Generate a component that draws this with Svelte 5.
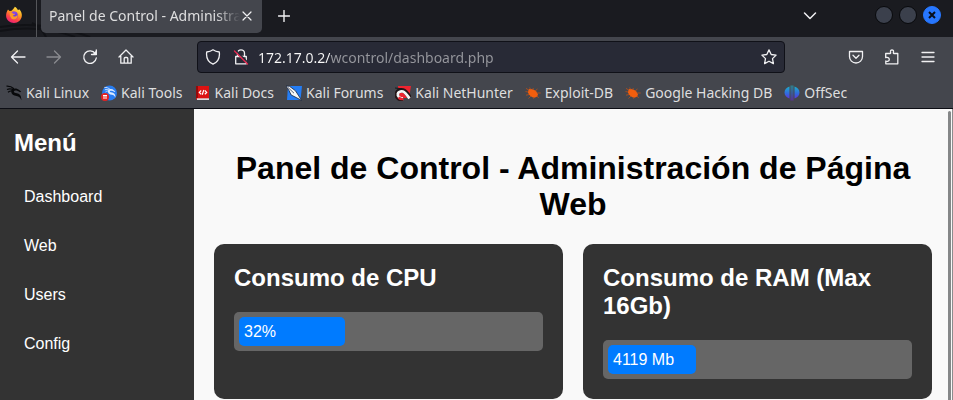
<script>
  const bookmarks = [
    { name: 'Kali Linux', icon: 'dragon' },
    { name: 'Kali Tools', icon: 'tools' },
    { name: 'Kali Docs', icon: 'docs' },
    { name: 'Kali Forums', icon: 'forums' },
    { name: 'Kali NetHunter', icon: 'nethunter' },
    { name: 'Exploit-DB', icon: 'bug' },
    { name: 'Google Hacking DB', icon: 'bug' },
    { name: 'OffSec', icon: 'offsec' },
  ];
  const menu = ['Dashboard', 'Web', 'Users', 'Config'];
  const cards = [
    { title: 'Consumo de CPU', value: '32%', percent: 32 },
    { title: 'Consumo de RAM (Max 16Gb)', value: '4119 Mb', percent: 26 },
  ];
  let address = $state('172.17.0.2/wcontrol/dashboard.php');
</script>

{#snippet dragon(color)}
  <path d="M.5 1.200C3.500 1 6 2 8 3.800M1 4.500C3.500 3.500 6 4 8 5.200M2 7.300C3.500 6 5 5.800 6.500 6" fill="none" stroke={color} stroke-width="1.200" />
  <path d="M7 4c2-1 4.500-.5 6.500 1.300l1.700 1.200-1.200.8c-2-1.500-4-2-5.500-1.500-1 .5-.8 1.500.3 2 3 .5 5 1 6 3.500l.7 4C14.300 12.500 13 11.500 10.500 11 7.500 10.500 5.500 9.200 5.300 7.200 5.200 5.500 5.800 4.500 7 4z" fill={color} />
{/snippet}

<div class="window">
  <header class="browser">
    <div class="tabstrip">
      <svg class="swirl" viewBox="0 0 120 37" fill="none" stroke="#111216" stroke-width="2" aria-hidden="true"><path d="M0 27Q45 20 90 37M0 31Q40 24 75 37M32 23Q42 28 46 37" /></svg>
      <span class="fox">
        <svg width="18" height="18" viewBox="0 0 18 18" aria-hidden="true">
          <defs>
            <linearGradient id="fox" x1=".8" y1="0" x2=".3" y2="1"><stop offset="0" stop-color="#fff04a" /><stop offset=".4" stop-color="#ffa01f" /><stop offset=".72" stop-color="#ff4545" /><stop offset="1" stop-color="#e91e78" /></linearGradient>
          </defs>
          <path d="M3 3.500 4.500 5l2-.2C7.500 3.500 9 3 9.800.8c2 1 2.500 2.400 3.200 3.400l1.200-1c2 2 2.900 4.200 2.600 6.700-.5 4-3.600 7-7.800 7s-7.700-3-7.900-7C1 7.500 1.800 5.200 3 3.500z" fill="url(#fox)" />
          <circle cx="9" cy="9.400" r="3.800" fill="#7540df" />
          <path d="M4.800 6.500c1.500-.6 3-.2 4 .8l1.500.5c-.5 1.200-1.600 1.300-2.500 1.900 1.500 1.400 3.800 1 4.500-.9.800 2.300-.8 4.600-3.300 4.600-2.800 0-4.600-2.500-4.200-6.900z" fill="#ff9a24" />
          <path d="M7 6.700c2-1.800 4.500-.7 5.200 1.200C10.800 7 9 7.600 8.400 8z" fill="#8b45e8" />
        </svg>
      </span>
      <div class="tab">
        <span class="tabtitle">Panel de Control - Administración</span>
        <button class="tabclose" aria-label="Cerrar pestaña"><svg width="10" height="10" viewBox="0 0 10 10"><path d="M1 1l8 8M9 1L1 9" /></svg></button>
      </div>
      <button class="tool newtab" aria-label="Nueva pestaña"><svg width="12" height="12" viewBox="0 0 12 12"><path d="M6 .5v11M.5 6h11" stroke-width="1.400" /></svg></button>
      <span class="spacer"></span>
      <button class="tool alltabs" aria-label="Listar pestañas"><svg width="14" height="10" viewBox="0 0 14 10"><path d="M1.500 2L7 7.500 12.500 2" stroke-width="1.500" /></svg></button>
      <div class="controls">
        <button class="dot" aria-label="Minimizar"></button>
        <button class="dot" aria-label="Maximizar"></button>
        <button class="dot close" aria-label="Cerrar"><svg width="8" height="8" viewBox="0 0 8 8"><path d="M1 1l6 6M7 1L1 7" /></svg></button>
      </div>
    </div>

    <div class="navbar">
      <div class="group">
        <button class="tool" aria-label="Atrás"><svg width="16" height="16" viewBox="0 0 16 16"><path d="M15 8H1.500M7.500 2L1.500 8l6 6" /></svg></button>
        <button class="tool dim" aria-label="Adelante"><svg width="16" height="16" viewBox="0 0 16 16"><path d="M1 8h13.500M8.500 2l6 6-6 6" /></svg></button>
        <button class="tool" aria-label="Recargar"><svg width="16" height="16" viewBox="0 0 16 16"><path d="M13.300 4.600A6.300 6.300 0 1 0 14.300 9M9.500 5.500h4.800V1" /><path d="M14.800 1v5H10z" fill="#f1f1f3" stroke="none" /></svg></button>
        <button class="tool" aria-label="Inicio"><svg width="16" height="16" viewBox="0 0 16 16"><path d="M1 8L8 1l7 7M2.800 7v7.200h10.400V7M6.200 14V9.500q0-1 1-1h1.600q1 0 1 1V14" /></svg></button>
      </div>
      <div class="urlbar">
        <svg width="16" height="16" viewBox="0 0 16 16"><path d="M8 .8c2 1.500 4.200 2 6.300 2.200.7 5.500-1.300 10-6.300 12.200C3 13 1 8.500 1.700 3 3.800 2.800 6 2.300 8 .8z" /></svg>
        <svg class="lock" width="16" height="16" viewBox="0 0 16 16"><path d="M2.700 7.500h10.600v7.300H2.700zM4.500 7.500V4.300a3.500 3.500 0 0 1 7 0v3.200" /><path d="M2.500 1l13 13" stroke="#282a36" stroke-width="1.500" /><path d="M1.500 2l13 13" stroke="#e22850" stroke-width="1.400" /></svg>
        <input aria-label="Dirección" type="text" spellcheck="false" bind:value={address} />
        <button class="star" aria-label="Añadir marcador"><svg width="16" height="16" viewBox="0 0 16 16"><path d="M8 .9l2.200 4.600 4.900.6-3.600 3.500.9 5L8 12.200l-4.400 2.400.9-5L.9 6.100l4.900-.6z" /></svg></button>
      </div>
      <div class="group">
        <button class="tool" aria-label="Pocket"><svg width="16" height="16" viewBox="0 0 16 16"><path d="M1.500 2.500h13v5a6.500 6.500 0 0 1-13 0zM5 6.300l3 3 3-3" /></svg></button>
        <button class="tool" aria-label="Extensiones"><svg width="16" height="16" viewBox="0 0 16 16"><path d="M1.700 4.500h4.500c.7 0 .5-.8.3-1.500C6.200 1.800 7 .9 8 .9s1.800.9 1.500 2.100c-.2.700-.4 1.500.3 1.500h4v10.300h-12V12c1.500.8 3.500 0 3.500-1.600S3.300 8 1.700 8.700z" /></svg></button>
        <button class="tool" aria-label="Menú de la aplicación"><svg width="16" height="16" viewBox="0 0 16 16"><path d="M2 3.500h12M2 8h12M2 12.500h12" /></svg></button>
      </div>
    </div>

    <nav class="bookmarks" aria-label="Marcadores">
      {#each bookmarks as b}
        <a href="#top">
          <svg width="16" height="16" viewBox="0 0 16 16" aria-hidden="true">
            {#if b.icon === 'dragon'}
              {@render dragon('#08090b')}
            {:else if b.icon === 'tools'}
              <circle cx="8.500" cy="8" r="7.500" fill="#287cf0" />
              <g transform="translate(3 1.500) scale(.75)">{@render dragon('#d9e9ff')}</g>
              <circle cx="4" cy="12" r="4" fill="#e52222" /><path d="M2 10.500h4M3 10.500v3.500M5 10.500v3.500" stroke="#fff" />
            {:else if b.icon === 'docs'}
              <path d="M1 1h13v14H2.500Q1 15 1 13z" fill="#dc1212" /><path d="M1 1h2v12H1z" fill="#920b0b" /><path d="M2 13.300h12V15H2z" fill="#ded9dc" />
              <path d="M6.200 5.500L4.300 7.400l1.900 1.800M9.800 5.500l1.900 1.900-1.900 1.800M8.800 5L7.200 9.800" fill="none" stroke="#fff" stroke-width="1.200" />
            {:else if b.icon === 'forums'}
              <path d="M2 1h14l-1.500 14H1z" fill="#247df5" />
              <path d="M0 1l3.500.3 6 4.500 3.200 5 3 4.700-5.500-3-5-2.500L3 5.500z" fill="#f7f7f7" stroke="#16243c" stroke-width=".8" /><path d="M2 2.500L8 8.200" stroke="#16243c" stroke-width=".7" />
            {:else if b.icon === 'nethunter'}
              <path d="M3 1h13l-2 12H4z" fill="#ee2430" />
              <path d="M8 14.500C4.500 14.500 1.500 12 1.800 9.200 2 6.500 5 4.800 8 5.500c3 .8 4.500 3.500 7 7.800" fill="none" stroke="#251718" stroke-width="4.600" />
              <path d="M8 13.500C5 13.500 2.500 11.500 2.800 9.200 3 7 5.500 5.800 8 6.500c2.500.8 4 3.500 6.500 7" fill="none" stroke="#f5f5f5" stroke-width="2.800" />
              <path d="M3.500 12.500c1.300 1.200 3 1.800 5 1.500" fill="none" stroke="#ee2430" stroke-width="2.400" />
              <path d="M0 3l7 .8L1 6" fill="none" stroke="#18191c" />
            {:else if b.icon === 'bug'}
              <path d="M3.500 4.500C6 3.500 8.500 4.200 11 6.300l2 3-.8 2.200-2.700 1.300C6.500 12.200 4 10.500 3 7.500z" fill="#f25e0d" />
              <path d="M3.500 5L1 3.300M5.500 4.500L4.700 2.500M7.500 4.500l1-1.500M10 6l2.500-2M12 8h3.800M3 7L.5 6.500M4 9.500l-3 .7M6 11l-2.500 2.500M9.500 12l-1 1.700M12 11l1.700 2" stroke="#b95019" fill="none" stroke-width=".8" />
            {:else}
              <defs><linearGradient id="off" x1="0" y1="0" x2="0" y2="1"><stop offset="0" stop-color="#18b8c8" /><stop offset=".55" stop-color="#3467df" /><stop offset="1" stop-color="#7022d5" /></linearGradient></defs>
              <path d="M5.500 1.500v12C2.500 12.500.5 10.500.5 7.500s2-5 5-6zM10.500 1.500v12c3-1 5-3 5-6s-2-5-5-6zM6.700.5h.8v15h-.8zM8.500.5h.8v15h-.8z" fill="url(#off)" />
            {/if}
          </svg>
          <span>{b.name}</span>
        </a>
      {/each}
    </nav>
  </header>

  <div class="page" id="top">
    <aside>
      <h2>Menú</h2>
      <ul>
        {#each menu as item}
          <li><a href={'#' + item.toLowerCase()}>{item}</a></li>
        {/each}
      </ul>
    </aside>
    <main>
      <h1>Panel de Control - Administración de Página Web</h1>
      <div class="cards">
        {#each cards as card}
          <section class="card">
            <h2>{card.title}</h2>
            <div class="track" role="progressbar" aria-label={card.title} aria-valuenow={card.percent} aria-valuetext={card.value}>
              <div class="fill" style="width: {card.percent}%">{card.value}</div>
            </div>
          </section>
        {/each}
      </div>
    </main>
    <div class="scrollbar"><span class="thumb"></span></div>
  </div>
</div>

<style>
  :global(body) { margin: 0; overflow: hidden; }
  .window { display: flex; flex-direction: column; min-height: 100vh; background: #f9f9f9; font-family: "Liberation Sans", Arial, sans-serif; }
  button { display: flex; align-items: center; justify-content: center; padding: 0; border: 0; background: none; color: inherit; }
  .browser { background: #44464d; border-bottom: 1px solid #0c0d14; color: #dededf; font: 14px/20px "Noto Sans", sans-serif; }
  svg { flex: none; }
  .tool svg, .urlbar svg, .tabclose svg, .dot svg { fill: none; stroke: #f1f1f3; stroke-width: 1.3; stroke-linejoin: round; stroke-linecap: round; }

  .tabstrip { position: relative; display: flex; align-items: flex-start; height: 37px; background: #1a1b20; }
  .swirl { position: absolute; left: 0; top: 0; width: 120px; height: 37px; }
  .fox { position: relative; box-sizing: border-box; width: 37px; height: 37px; padding: 6px 5px; border-right: 1px solid #55565a; }
  .tab { position: relative; box-sizing: border-box; display: flex; align-items: center; width: 221px; height: 33px; margin-left: 4px; padding: 0 8px 1px; border-radius: 0 0 5px 5px; background: #44464d; }
  .tabtitle { flex: 1; overflow: hidden; white-space: nowrap; mask-image: linear-gradient(to left, transparent, #000 24px); }
  .tabclose { width: 14px; height: 20px; }
  .tabclose svg { stroke-width: 1.2; }
  .tool { width: 36px; height: 32px; }
  .newtab { margin-left: 4px; }
  .alltabs { margin-right: 47px; }
  .spacer { flex: 1; }
  .controls { display: flex; align-items: center; gap: 6px; height: 30px; padding-right: 12px; }
  .dot { box-sizing: border-box; width: 18px; height: 18px; border: 1px solid #08090c; border-radius: 50%; background: #3b404c; }
  .dot.close { border-color: #2777ff; background: #2777ff; }
  .dot.close svg { stroke: #080e1c; stroke-width: 2; stroke-linecap: butt; }

  .navbar { display: flex; align-items: center; justify-content: space-between; gap: 53px; height: 40px; padding-right: 7px; }
  .group { display: flex; }
  .dim { opacity: .4; }
  .urlbar { box-sizing: border-box; flex: 1; display: flex; align-items: center; height: 32px; padding: 0 7px; border: 1px solid #101118; border-radius: 4px; background: #282a36; }
  .lock { margin: 0 9px 0 12px; }
  .urlbar input { flex: 1; min-width: 0; height: 28px; padding: 0; border: 0; outline: 0; font: 14px/20px "Noto Sans", sans-serif; color: transparent; background: linear-gradient(to right, #fafafa 72px, #96979d 72px); background-clip: text; -webkit-background-clip: text; }

  .bookmarks { display: flex; align-items: center; gap: 12px; height: 31px; padding-left: 6px; white-space: nowrap; }
  .bookmarks a { display: flex; align-items: center; gap: 4px; color: inherit; text-decoration: none; }

  .page { flex: 1; display: flex; color: #fff; font-size: 16px; line-height: 18px; }
  h1, h2, ul { margin: 0; }
  h2 { font-size: 24px; line-height: 28px; }
  aside { box-sizing: border-box; flex: none; width: 194px; padding: 20px 14px; background: #333; }
  ul { display: flex; flex-direction: column; gap: 11px; margin-top: 21px; padding: 0; list-style: none; }
  li a { display: block; padding: 10px; color: #fff; text-decoration: none; }
  main { flex: 1; padding: 41px 16px 0 20px; }
  h1 { margin-bottom: 22px; color: #000; font-size: 32px; line-height: 36px; text-align: center; }
  .cards { display: grid; grid-template-columns: 1fr 1fr; gap: 20px; }
  .card { padding: 20px; border-radius: 10px; background: #333; }
  .track { margin-top: 20px; padding: 5px; border-radius: 5px; background: #666; }
  .fill { padding: 5px; border-radius: 5px; background: #007bff; line-height: 19px; }
  .scrollbar { width: 4px; padding-top: 2px; display: flex; border-right: 1px solid #8b8d8e; }
  .thumb { width: 3px; border-radius: 2px 2px 0 0; background: #858788; }
</style>
